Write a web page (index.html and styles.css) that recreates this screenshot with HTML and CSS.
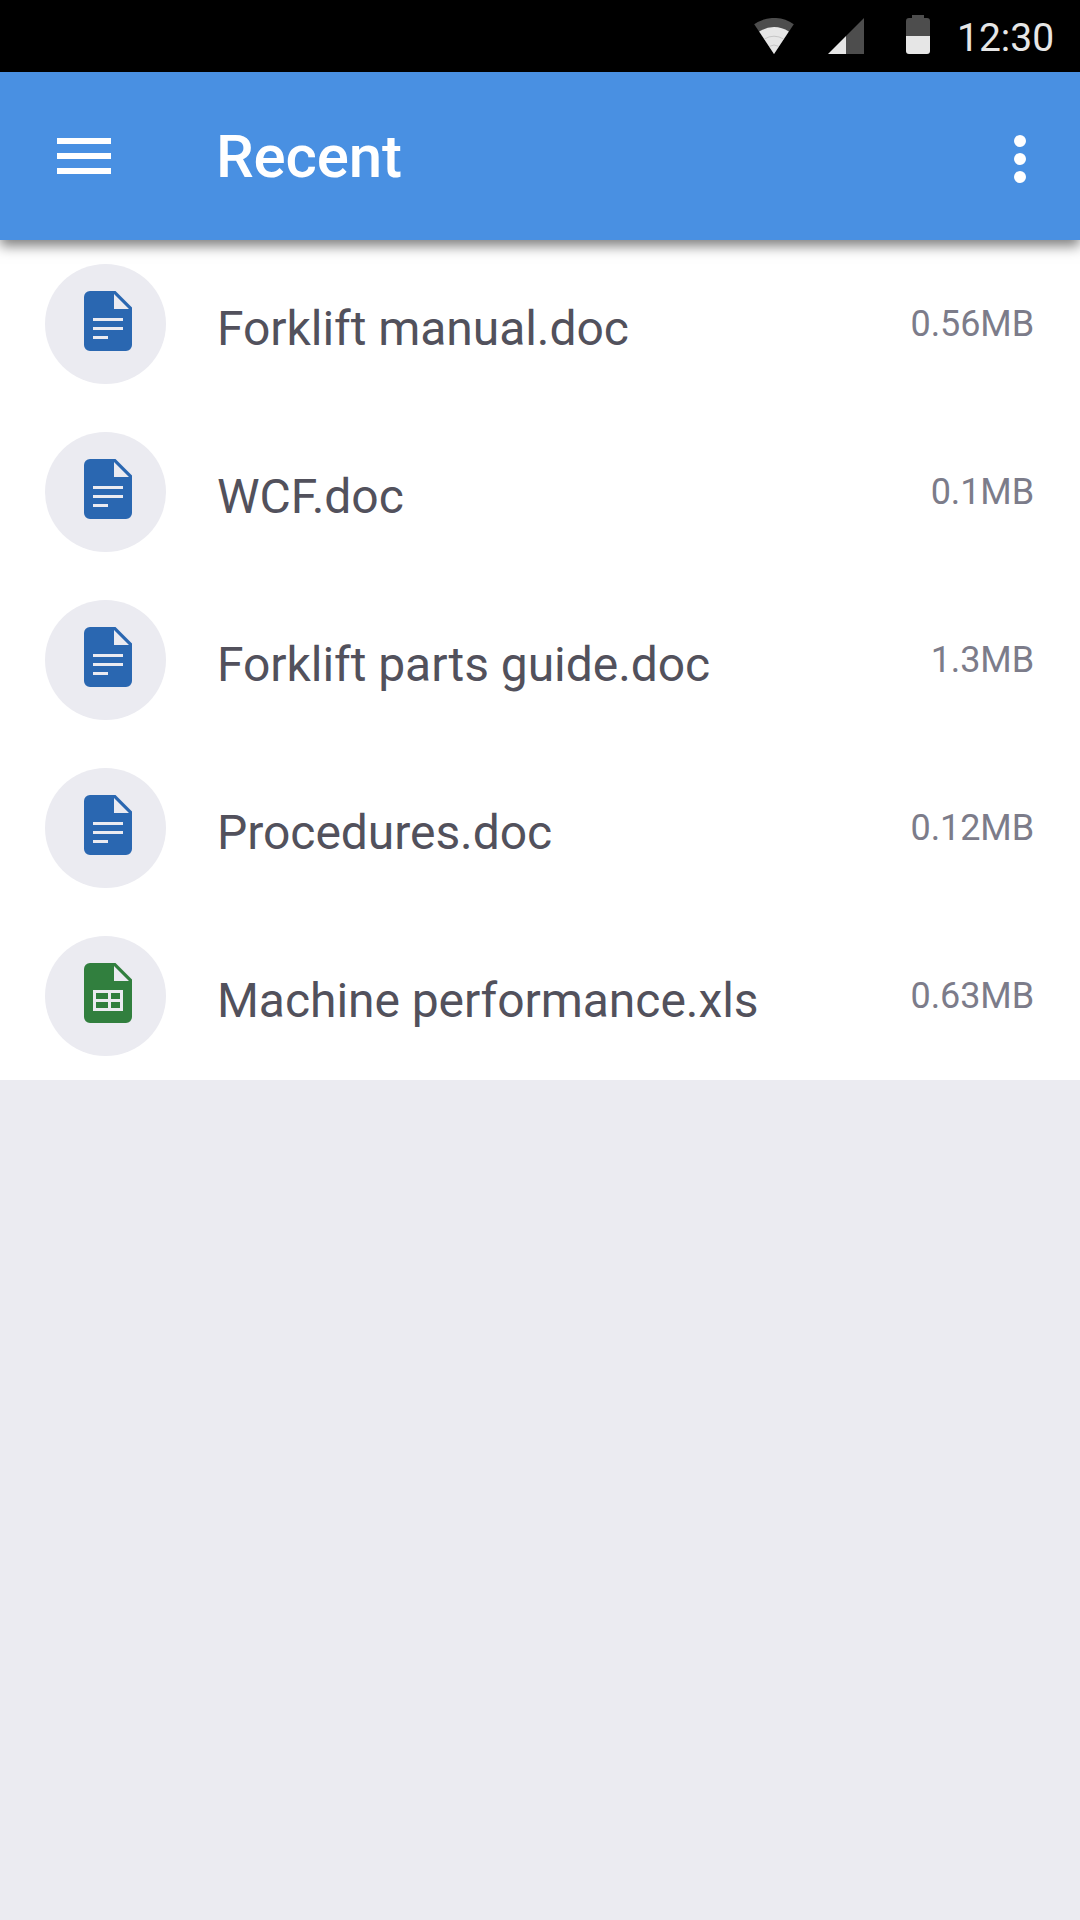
FILE: index.html
```html
<!DOCTYPE html>
<html lang="en">
<head>
<meta charset="utf-8">
<title>Recent</title>
<link rel="stylesheet" href="styles.css">
</head>
<body>
<svg class="symbols" aria-hidden="true">
  <symbol id="doc" viewBox="0 0 48 60">
    <path fill-rule="evenodd" d="M6 0H31.5L48 16.5V54a6 6 0 0 1-6 6H6a6 6 0 0 1-6-6V6a6 6 0 0 1 6-6ZM30 3V18H45ZM9 27V30H39V27ZM9 36V39H39V36ZM9 45V48H24V45Z"/>
  </symbol>
  <symbol id="xls" viewBox="0 0 48 60">
    <path fill-rule="evenodd" d="M6 0H31.5L48 16.5V54a6 6 0 0 1-6 6H6a6 6 0 0 1-6-6V6a6 6 0 0 1 6-6ZM30 3V18H45ZM9 27V48H39V27ZM12 30H24V36H12ZM27 30H36V36H27ZM12 39H24V45H12ZM27 39H36V45H27Z"/>
  </symbol>
</svg>
<div class="status-bar">
  <svg class="wifi" width="40" height="36" viewBox="0 0 40 36">
    <path fill="#4d4d4d" d="M0.2 6.3A34 34 0 0 1 39.8 6.3L20 36Z"/>
    <path fill="#e6e6e6" d="M5.2 13.6A26.5 26.5 0 0 1 34.8 13.6L20 36Z"/>
    <path fill="none" stroke="#b8b8b8" stroke-width=".7" d="M10.500 21A17.500 17.500 0 0 1 29.500 21M15.500 28.300A9 9 0 0 1 24.500 28.300"/>
  </svg>
  <svg class="cell" width="36" height="36" viewBox="0 0 36 36">
    <path fill="#4d4d4d" d="M36 0V36H18V18Z"/>
    <path fill="#e6e6e6" d="M18 18V36H0Z"/>
  </svg>
  <svg class="battery" width="24" height="39" viewBox="0 0 24 39">
    <path fill="#4d4d4d" d="M6 0H18V3H21a3 3 0 0 1 3 3V21H0V6a3 3 0 0 1 3-3H6Z"/>
    <path fill="#e6e6e6" d="M0 21H24V36a3 3 0 0 1-3 3H3a3 3 0 0 1-3-3Z"/>
  </svg>
  <span class="time">12:30</span>
</div>
<header class="app-bar">
  <svg class="menu" width="54" height="36" viewBox="0 0 54 36"><path fill="#fff" d="M0 0H54V6H0ZM0 15H54V21H0ZM0 30H54V36H0Z"/></svg>
  <h1 class="title">Recent</h1>
  <svg class="more" width="12" height="48" viewBox="0 0 12 48" fill="#fff"><circle cx="6" cy="6" r="6"/><circle cx="6" cy="24" r="6"/><circle cx="6" cy="42" r="6"/></svg>
</header>
<main class="files">
  <div class="row"><span class="avatar"><svg class="icon doc"><use href="#doc"/></svg></span><span class="name">Forklift manual.doc</span><span class="size">0.56MB</span></div>
  <div class="row"><span class="avatar"><svg class="icon doc"><use href="#doc"/></svg></span><span class="name">WCF.doc</span><span class="size">0.1MB</span></div>
  <div class="row"><span class="avatar"><svg class="icon doc"><use href="#doc"/></svg></span><span class="name">Forklift parts guide.doc</span><span class="size">1.3MB</span></div>
  <div class="row"><span class="avatar"><svg class="icon doc"><use href="#doc"/></svg></span><span class="name">Procedures.doc</span><span class="size">0.12MB</span></div>
  <div class="row"><span class="avatar"><svg class="icon xls"><use href="#xls"/></svg></span><span class="name">Machine performance.xls</span><span class="size">0.63MB</span></div>
</main>
</body>
</html>
```
FILE: styles.css
```css
* {
  box-sizing: border-box;
}

body {
  margin: 0;
  min-height: 1920px;
  background: #ebebf1;
  font-family: Roboto, sans-serif;
}

svg {
  display: block;
  flex: none;
}

.symbols {
  display: none;
}

.status-bar {
  display: flex;
  align-items: flex-start;
  height: 72px;
  padding: 0 27px 0 0;
  justify-content: flex-end;
  background: #000;
}

.wifi {
  margin: 18px 34px 0 0;
}

.cell {
  margin: 18px 42px 0 0;
}

.battery {
  margin: 15px 0 0;
}

.time {
  width: 123px;
  padding-left: 27px;
  margin-top: 15px;
  color: #e6e6e6;
  font-size: 39px;
  line-height: 46px;
}

.app-bar {
  position: relative;
  display: flex;
  align-items: flex-start;
  height: 168px;
  padding: 0 54px 0 57px;
  background: #4990e2;
  box-shadow: 0 6px 12px rgba(0, 0, 0, 0.5);
}

.menu {
  margin-top: 66px;
}

.title {
  flex: 1;
  margin: 50px 0 0 105px;
  color: #fff;
  font-size: 60px;
  font-weight: 500;
  line-height: 70px;
  letter-spacing: -0.15px;
}

.more {
  margin-top: 63px;
}

.files {
  background: #fff;
}

.row {
  display: flex;
  align-items: flex-start;
  height: 168px;
  padding: 24px 46px 0 45px;
}

.avatar {
  flex: none;
  width: 121px;
  height: 120px;
  padding: 27px 0 0 39px;
  border-radius: 50%;
  background: #ebebf1;
}

.icon {
  width: 48px;
  height: 60px;
}

.doc {
  fill: #2a67b1;
}

.xls {
  fill: #317f3e;
}

.name {
  flex: 1;
  margin: 37px 0 0 51px;
  color: #52515c;
  font-size: 48px;
  line-height: 56px;
  letter-spacing: -0.05px;
}

.size {
  margin-top: 39px;
  color: #7c7c8a;
  font-size: 36px;
  line-height: 42px;
  letter-spacing: -0.1px;
}
```
